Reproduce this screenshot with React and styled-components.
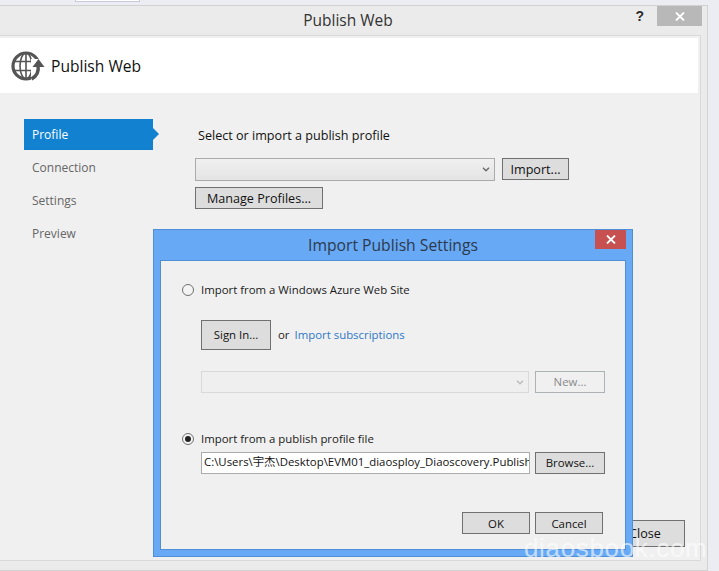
import React from "react";
import styled, { createGlobalStyle } from "styled-components";

const Global = createGlobalStyle`
  html, body { margin: 0; padding: 0; background: #ecedf3; overflow: hidden; }
  * { box-sizing: border-box; }
`;

const Page = styled.div`
  position: relative;
  width: 719px;
  height: 571px;
  overflow: hidden;
  background: #ecedf3;
  font-family: "Open Sans", "Noto Sans CJK SC", sans-serif;
  font-size: 12px;
  color: #1e1e1e;
`;

const TopStrip = styled.div`
  height: 5px;
  display: flex;
  align-items: flex-start;
  padding-left: 75px;
`;

const TabStub = styled.div`
  width: 65px;
  height: 2px;
  background: #fff;
  border: 1px solid #c9c9dc;
  border-top: 0;
`;

const Win = styled.div`
  width: 708px;
  height: 566px;
  border: 1px solid #d2d2d2;
  border-left: 0;
  background: #ebebeb;
  padding-right: 6px;
  display: flex;
  flex-direction: column;
`;

const TitleBar = styled.div`
  position: relative;
  height: 29px;
  flex: none;
  display: flex;
  align-items: center;
  justify-content: center;
  font-size: 15.5px;
  line-height: 27px;
  color: #333;
  padding-right: 5px;
`;

const HelpMark = styled.span`
  position: absolute;
  right: 57px;
  top: 2px;
  font: bold 14px "Liberation Sans", sans-serif;
  color: #2b2b2b;
`;

const CloseX = styled.div`
  position: absolute;
  right: -1px;
  top: 0;
  width: 45px;
  height: 20px;
  background: ${(p) => p.$bg};
  display: flex;
  align-items: center;
  justify-content: center;
`;

const Frame = styled.div`
  flex: 1;
  min-height: 0;
  border-top: 1px solid #d9d9d9;
  border-right: 1px solid #d9d9d9;
  border-bottom: 1px solid #d9d9d9;
  margin-bottom: 9px;
  padding: 2px 2px 0 0;
  background: #f0f0f0;
  display: flex;
  flex-direction: column;
`;

const Header = styled.div`
  height: 55px;
  flex: none;
  background: #fff;
  display: flex;
  align-items: center;
  padding-left: 11px;
  gap: 6px;
  font-size: 15.6px;
  color: #111;
`;

const Body = styled.div`
  flex: 1;
  display: flex;
  min-height: 0;
  padding-top: 26px;
`;

const Side = styled.div`
  width: 195px;
  flex: none;
  padding-left: 24px;
  display: flex;
  flex-direction: column;
`;

const NavItem = styled.div`
  position: relative;
  width: 129px;
  height: ${(p) => (p.$active ? "31px" : "33px")};
  margin-bottom: ${(p) => (p.$active ? "1px" : "0")};
  padding-left: 8px;
  display: flex;
  align-items: center;
  color: ${(p) => (p.$active ? "#fff" : "#666")};
  background: ${(p) => (p.$active ? "#1282d0" : "transparent")};
  &::after {
    content: "";
    display: ${(p) => (p.$active ? "block" : "none")};
    position: absolute;
    left: 100%;
    top: 9px;
    border-left: 6px solid #1282d0;
    border-top: 6px solid transparent;
    border-bottom: 6px solid transparent;
  }
`;

const Main = styled.div`
  flex: 1;
  display: flex;
  flex-direction: column;
  padding-right: 13px;
  font-size: 12.6px;
`;

const Lead = styled.div`
  padding: 8px 0 0 3px;
  height: 39px;
  color: #111;
`;

const Row = styled.div`
  display: flex;
  gap: 7px;
  align-items: flex-start;
  margin-top: ${(p) => p.$top || 0}px;
`;

const Btn = styled.div`
  width: ${(p) => p.$w}px;
  height: ${(p) => p.$h || 22}px;
  flex: none;
  border: 1px solid ${(p) => (p.$off ? "#adb2b5" : "#707070")};
  background: ${(p) => (p.$off ? "#f0f0f0" : "#dddddd")};
  color: ${(p) => (p.$off ? "#8a8a8a" : "#111")};
  padding-bottom: ${(p) => (p.$lift ? "2px" : "0")};
  display: flex;
  align-items: center;
  justify-content: center;
`;

const Combo = styled.div`
  width: ${(p) => p.$w}px;
  height: ${(p) => p.$h}px;
  flex: none;
  border: 1px solid ${(p) => (p.$off ? "#d9d9d9" : "#ababab")};
  background: ${(p) =>
    p.$off ? "#efefef" : "linear-gradient(#f0f0f0, #e4e4e4)"};
  display: flex;
  align-items: center;
  justify-content: flex-end;
  padding-right: 4px;
`;

const Footer = styled.div`
  margin-top: auto;
  margin-bottom: 13px;
  display: flex;
  justify-content: flex-end;
`;

const Dialog = styled.div`
  position: absolute;
  left: 153px;
  top: 229px;
  width: 480px;
  height: 328px;
  background: #68a9f6;
  border: 1px solid #4f8fd8;
  padding: 0 6px 6px 6px;
  display: flex;
  flex-direction: column;
  font-size: 11.4px;
`;

const DialogTitle = styled.div`
  position: relative;
  height: 30px;
  flex: none;
  display: flex;
  align-items: center;
  justify-content: center;
  font-size: 15.7px;
  padding-bottom: 1px;
  color: #2c3a4c;
`;

const DialogClose = styled(CloseX)`
  right: 0;
  width: 31px;
  height: 19px;
`;

const DialogBody = styled.div`
  flex: 1;
  background: #f0f0f0;
  border: 1px solid #4f8fd8;
  padding: 20px 20px 0 21px;
  display: flex;
  flex-direction: column;
`;

const RadioRow = styled.div`
  display: flex;
  align-items: center;
  gap: 7px;
  height: 18px;
  margin-top: ${(p) => p.$top || 0}px;
  color: #1a1a1a;
`;

const RadioDot = styled.span`
  width: 12px;
  height: 12px;
  flex: none;
  border-radius: 50%;
  border: 1px solid #707070;
  background: #f4f4f4;
  display: flex;
  align-items: center;
  justify-content: center;
  &::after {
    content: "";
    width: 6px;
    height: 6px;
    border-radius: 50%;
    background: ${(p) => (p.$on ? "#222" : "transparent")};
  }
`;

const Label = styled.span`
  margin-bottom: 2px;
`;

const Indented = styled.div`
  margin-left: 19px;
  margin-top: ${(p) => p.$top}px;
  display: flex;
  align-items: ${(p) => p.$align || "flex-start"};
  gap: ${(p) => p.$gap || 5}px;
`;

const LinkText = styled(Label)`
  color: #2f78c8;
  margin-left: -2px;
`;

const PathBox = styled.div`
  width: 329px;
  height: 22px;
  flex: none;
  background: #fff;
  border: 1px solid #ababab;
  padding: 0 0 0 2px;
  line-height: 17px;
  white-space: nowrap;
  overflow: hidden;
  color: #111;
`;

const DialogActions = styled.div`
  margin-top: 38px;
  margin-left: 280px;
  display: flex;
  gap: 5px;
`;

const Watermark = styled.div`
  position: absolute;
  left: 524px;
  top: 530px;
  font: 26px/36px "Liberation Sans", sans-serif;
  letter-spacing: 0.65px;
  color: rgba(255, 255, 255, 0.62);
  white-space: nowrap;
`;

const Chevron = ({ color }) => (
  <svg width="8" height="5" viewBox="0 0 8 5">
    <path d="M1 .8l3 3 3-3" fill="none" stroke={color} strokeWidth="1.3" />
  </svg>
);

const Cross = () => (
  <svg width="10" height="9" viewBox="0 0 10 9">
    <path d="M1 .5l8 8M9 .5l-8 8" stroke="#fff" strokeWidth="1.8" />
  </svg>
);

const GlobeIcon = () => (
  <svg width="34" height="30" viewBox="0 0 34 30" style={{ flex: "none" }}>
    <circle cx="15" cy="15" r="13" fill="none" stroke="#555" strokeWidth="3.2" />
    <ellipse cx="15" cy="15" rx="6" ry="13" fill="none" stroke="#555" strokeWidth="1.6" />
    <path d="M2 10.5h26M2 19.5h26M15 2v26" stroke="#555" strokeWidth="1.6" />
    <path d="M20 8h14v22H20z" fill="#fff" />
    <path d="M27 14c1 6-1 11-6.500 14" fill="none" stroke="#555" strokeWidth="3.4" />
    <path d="M21.500 16l6-8 6 8z" fill="#555" />
  </svg>
);

export default function App() {
  return (
    <Page>
      <Global />
      <TopStrip>
        <TabStub />
      </TopStrip>
      <Win>
        <TitleBar>
          Publish Web
          <HelpMark>?</HelpMark>
          <CloseX $bg="#b8b8b8">
            <Cross />
          </CloseX>
        </TitleBar>
        <Frame>
          <Header>
            <GlobeIcon />
            Publish Web
          </Header>
          <Body>
            <Side>
              <NavItem $active>Profile</NavItem>
              <NavItem>Connection</NavItem>
              <NavItem>Settings</NavItem>
              <NavItem>Preview</NavItem>
            </Side>
            <Main>
              <Lead>Select or import a publish profile</Lead>
              <Row>
                <Combo $w={300} $h={23}>
                  <Chevron color="#666" />
                </Combo>
                <Btn $w={67}>Import...</Btn>
              </Row>
              <Row $top={6}>
                <Btn $w={128}>Manage Profiles...</Btn>
              </Row>
              <Footer>
                <Btn $w={80} $h={27}>Close</Btn>
              </Footer>
            </Main>
          </Body>
        </Frame>
      </Win>

      <Dialog>
        <DialogTitle>
          Import Publish Settings
          <DialogClose $bg="#c75050">
            <Cross />
          </DialogClose>
        </DialogTitle>
        <DialogBody>
          <RadioRow>
            <RadioDot />
            <Label>Import from a Windows Azure Web Site</Label>
          </RadioRow>
          <Indented $top={21} $gap={7} $align="center">
            <Btn $lift $w={70} $h={30}>Sign In...</Btn>
            <Label>or</Label>
            <LinkText>Import subscriptions</LinkText>
          </Indented>
          <Indented $top={21} $gap={6}>
            <Combo $off $w={328} $h={22}>
              <Chevron color="#bbb" />
            </Combo>
            <Btn $off $lift $w={70}>New...</Btn>
          </Indented>
          <RadioRow $top={37}>
            <RadioDot $on />
            <Label>Import from a publish profile file</Label>
          </RadioRow>
          <Indented $top={4}>
            <PathBox>C:\Users\宇杰\Desktop\EVM01_diaosploy_Diaoscovery.PublishSettings</PathBox>
            <Btn $lift $w={70}>Browse...</Btn>
          </Indented>
          <DialogActions>
            <Btn $w={68}>OK</Btn>
            <Btn $w={68}>Cancel</Btn>
          </DialogActions>
        </DialogBody>
      </Dialog>

      <Watermark>diaosbook.com</Watermark>
    </Page>
  );
}
